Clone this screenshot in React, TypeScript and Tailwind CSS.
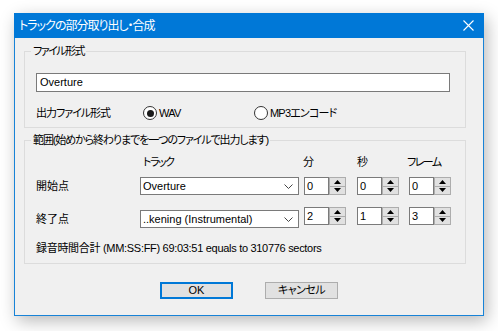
const font = "font-['Liberation_Sans','Noto_Sans_CJK_JP',sans-serif] [font-feature-settings:'palt']";

const Spin = ({ value }: { value: string }) => (
  <div className="flex w-[42px] h-[18px]">
    <div className="flex-1 bg-white border border-[#7a7a7a] pl-[2px] text-[11px] leading-[16px] text-black">{value}</div>
    <div className="flex flex-col w-[17px]">
      <div className="flex-1 flex items-center justify-center bg-[#e1e1e1] border border-[#adadad]">
        <svg width="7" height="4" viewBox="0 0 7 4"><path d="M0 4 L3.5 0 L7 4 Z" fill="#000" /></svg>
      </div>
      <div className="flex-1 flex items-center justify-center bg-[#e1e1e1] border border-t-0 border-[#adadad]">
        <svg width="7" height="4" viewBox="0 0 7 4"><path d="M0 0 L3.5 4 L7 0 Z" fill="#000" /></svg>
      </div>
    </div>
  </div>
);

const Combo = ({ text, className = "" }: { text: string; className?: string }) => (
  <div className={`flex items-center w-[159px] h-[18px] bg-white border border-[#7a7a7a] pl-[2px] pr-[5px] ${className}`}>
    <span className="flex-1 text-[11px] leading-[16px] text-black truncate">{text}</span>
    <svg width="9" height="5" viewBox="0 0 9 5"><path d="M0.5 0.5 L4.5 4.5 L8.5 0.5" stroke="#444" strokeWidth="1" fill="none" /></svg>
  </div>
);

const Radio = ({ checked, label }: { checked?: boolean; label: string }) => (
  <div className="flex items-center gap-[2px]">
    <div className="w-[14px] h-[14px] rounded-full border border-[#333] bg-white flex items-center justify-center">
      {checked && <div className="w-[7px] h-[7px] rounded-full bg-[#1a1a1a]" />}
    </div>
    <span className="text-[11px] leading-[14px] tracking-[-0.8px]">{label}</span>
  </div>
);

export default function App() {
  return (
    <div className={`w-[498px] h-[331px] bg-white pt-[13px] pl-[14px] ${font} text-black`}>
      <div className="w-[470px] h-[303px] flex flex-col bg-[#f0f0f0] border border-t-0 border-[#1883d7] shadow-[3px_5px_16px_rgba(0,0,0,0.28)]">
        <div className="h-[25px] -mx-px bg-[#0078d7] flex items-center justify-between pl-[5px] pr-[10px]">
          <span className="text-white text-[12px] leading-[14px] tracking-[-1px]">トラックの部分取り出し・合成</span>
          <svg width="11" height="11" viewBox="0 0 11 11"><path d="M0.5 0.5 L10.5 10.5 M10.5 0.5 L0.5 10.5" stroke="#fff" strokeWidth="1.1" /></svg>
        </div>
        <div className="flex flex-col pl-[9px]">
          <fieldset className="mt-[6px] w-[442px] h-[84px] border border-[#dcdcdc] px-[11px]">
            <legend className="ml-[-5px] px-[2px] text-[11px] leading-[14px] tracking-[-1.5px]">ファイル形式</legend>
            <div className="mt-[15px] w-[414px] h-[19px] bg-white border border-[#7a7a7a] pl-[3px] text-[11px] leading-[17px]">Overture</div>
            <div className="mt-[13px] flex items-center h-[16px]">
              <span className="w-[107px] text-[11px] leading-[14px] tracking-[-1px]">出力ファイル形式</span>
              <div className="w-[111px]"><Radio checked label="WAV" /></div>
              <Radio label="MP3エンコード" />
            </div>
          </fieldset>
          <fieldset className="mt-[5px] w-[442px] h-[131px] border border-[#dcdcdc] px-[11px]">
            <legend className="ml-[-5px] px-[2px] text-[11px] leading-[14px] tracking-[-1.1px]">範囲(始めから終わりまでを一つのファイルで出力します)</legend>
            <div className="mt-[8px] flex h-[14px] text-[11px] leading-[14px]">
              <span className="ml-[107px] w-[160px] tracking-[-1.5px]">トラック</span>
              <span className="w-[54px]">分</span>
              <span className="w-[50px]">秒</span>
              <span className="tracking-[-1.5px]">フレーム</span>
            </div>
            <div className="mt-[8px] flex items-start">
              <span className="w-[104px] text-[11px] leading-[18px]">開始点</span>
              <Combo text="Overture" />
              <div className="ml-[5px]"><Spin value="0" /></div>
              <div className="ml-[11px]"><Spin value="0" /></div>
              <div className="ml-[10px]"><Spin value="0" /></div>
            </div>
            <div className="mt-[12px] flex items-start">
              <span className="w-[104px] mt-[3px] text-[11px] leading-[18px]">終了点</span>
              <Combo text="..kening (Instrumental)" className="mt-[3px]" />
              <div className="ml-[5px]"><Spin value="2" /></div>
              <div className="ml-[11px]"><Spin value="1" /></div>
              <div className="ml-[10px]"><Spin value="3" /></div>
            </div>
            <div className="mt-[13px] text-[11px] leading-[14px] whitespace-nowrap tracking-[-0.3px]">
              録音時間合計 (MM:SS:FF) 69:03:51 equals to 310776 sectors
            </div>
          </fieldset>
        </div>
        <div className="mt-[18px] flex justify-center gap-[32px]">
          <button className="w-[73px] h-[17px] bg-[#e1e1e1] border-2 border-[#0078d7] text-[11px] leading-[13px]">OK</button>
          <button className="w-[73px] h-[17px] bg-[#e1e1e1] border border-[#adadad] text-[11px] leading-[15px] tracking-[-0.5px]">キャンセル</button>
        </div>
      </div>
    </div>
  );
}
